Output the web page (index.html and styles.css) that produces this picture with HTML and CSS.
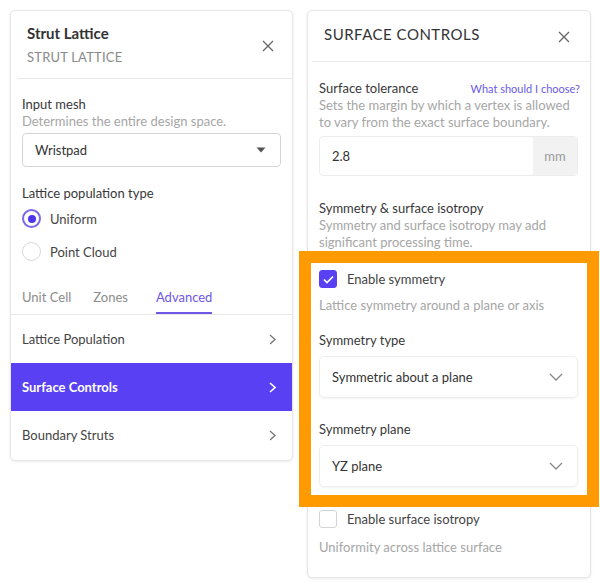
FILE: index.html
```html
<!DOCTYPE html>
<html>
<head>
<meta charset="utf-8">
<link rel="stylesheet" href="styles.css">
</head>
<body>
<div class="page">
  <section class="panel left">
    <header class="phead">
      <div class="ptitles">
        <div class="ptitle">Strut Lattice</div>
        <div class="psub">STRUT LATTICE</div>
      </div>
      <svg class="close" width="12" height="12" viewBox="0 0 12 12"><path d="M1 1L11 11M11 1L1 11" stroke="#666" stroke-width="1.3" fill="none"/></svg>
    </header>
    <div class="lbody">
      <div class="label">Input mesh</div>
      <div class="desc">Determines the entire design space.</div>
      <div class="lselect">
        <span>Wristpad</span>
        <svg width="10" height="6" viewBox="0 0 10 6"><path d="M0.5 0.5H9.5L5 5.5Z" fill="#555"/></svg>
      </div>
      <div class="label gap">Lattice population type</div>
      <div class="radio on"><span class="dot"></span><span>Uniform</span></div>
      <div class="radio"><span class="dot"></span><span>Point Cloud</span></div>
      <nav class="tabs">
        <span class="tab t1">Unit Cell</span>
        <span class="tab t2">Zones</span>
        <span class="tab active">Advanced</span>
      </nav>
    </div>
    <ul class="list">
      <li><span>Lattice Population</span><svg width="7" height="11" viewBox="0 0 7 11"><path d="M1 1L6 5.5L1 10" stroke="#777" stroke-width="1.3" fill="none"/></svg></li>
      <li class="sel"><span>Surface Controls</span><svg width="7" height="11" viewBox="0 0 7 11"><path d="M1 1L6 5.5L1 10" stroke="#fff" stroke-width="1.6" fill="none"/></svg></li>
      <li><span>Boundary Struts</span><svg width="7" height="11" viewBox="0 0 7 11"><path d="M1 1L6 5.5L1 10" stroke="#777" stroke-width="1.3" fill="none"/></svg></li>
    </ul>
  </section>

  <section class="panel right">
    <header class="phead rhead">
      <div class="ptitle caps">SURFACE CONTROLS</div>
      <svg class="close" width="12" height="12" viewBox="0 0 12 12"><path d="M1 1L11 11M11 1L1 11" stroke="#666" stroke-width="1.3" fill="none"/></svg>
    </header>
    <div class="rbody">
      <div class="labelrow"><span class="label">Surface tolerance</span><span class="link">What should I choose?</span></div>
      <div class="desc">Sets the margin by which a vertex is allowed to vary from the exact surface boundary.</div>
      <div class="input"><span class="val">2.8</span><span class="unit">mm</span></div>
      <div class="label gap2">Symmetry &amp; surface isotropy</div>
      <div class="desc">Symmetry and surface isotropy may add significant processing time.</div>
      <div class="check on"><span class="box"><svg width="11" height="9" viewBox="0 0 11 9"><path d="M1 4.5L4 7.5L10 1.5" stroke="#fff" stroke-width="1.7" fill="none"/></svg></span><span>Enable symmetry</span></div>
      <div class="desc cdesc">Lattice symmetry around a plane or axis</div>
      <div class="label st">Symmetry type</div>
      <div class="rselect"><span>Symmetric about a plane</span><svg width="14" height="8" viewBox="0 0 14 8"><path d="M1 1L7 7L13 1" stroke="#888" stroke-width="1.3" fill="none"/></svg></div>
      <div class="label sp">Symmetry plane</div>
      <div class="rselect"><span>YZ plane</span><svg width="14" height="8" viewBox="0 0 14 8"><path d="M1 1L7 7L13 1" stroke="#888" stroke-width="1.3" fill="none"/></svg></div>
      <div class="check iso"><span class="box"></span><span>Enable surface isotropy</span></div>
      <div class="desc cdesc last">Uniformity across lattice surface</div>
    </div>
  </section>

  <div class="highlight"></div>
</div>
</body>
</html>
```

FILE: styles.css
```css
* { box-sizing: border-box; }
html, body { margin: 0; padding: 0; background: #fff; }
body {
  font-family: Lato, "Open Sans", "Liberation Sans", sans-serif;
  font-size: 13px;
  color: #3a3a3a;
  width: 600px;
  height: 588px;
  overflow: hidden;
}
.page {
  position: relative;
  display: flex;
  align-items: flex-start;
  gap: 14px;
  padding: 10px 0 0 10px;
  height: 588px;
}
.panel {
  background: #fff;
  border: 1px solid #e6e6e6;
  border-radius: 5px;
  box-shadow: 0 1px 3px rgba(0,0,0,0.08);
  overflow: hidden;
}
.left { width: 283px; height: 451px; }
.right { width: 284px; height: 568px; }

.phead {
  display: flex;
  justify-content: space-between;
  align-items: center;
  margin-left: 6px;
  border-bottom: 1px solid #e8e8e8;
  height: 68px;
  padding: 0 18px 0 10px;
}
.ptitle { font-size: 15px; font-weight: 700; color: #333; line-height: 20px; }
.psub { font-size: 13px; color: #8a8a8a; margin-top: 6px; letter-spacing: 0.2px; }
.ptitles { margin-top: -1px; }
.close { margin-top: 2px; }
.rhead { height: 51px; margin-left: 4px; padding: 0 20px 0 12px; align-items: flex-start; padding-top: 13px; }
.caps { font-weight: 400; letter-spacing: 0.5px; font-size: 15px; color: #333; }
.rhead .close { margin-top: 7px; }

.lbody { padding: 17px 11px 0 11px; }
.label { line-height: 17px; color: #383838; }
.desc { line-height: 17px; color: #a6a6a6; }
.lselect {
  display: flex;
  justify-content: space-between;
  align-items: center;
  height: 34px;
  margin-top: 3px;
  border: 1px solid #d4d4d4;
  border-radius: 4px;
  padding: 0 14px 0 12px;
  color: #333;
}
.label.gap { margin-top: 18px; }
.radio {
  display: flex;
  align-items: center;
  gap: 9px;
  height: 33px;
  color: #444;
}
.dot {
  width: 19px;
  height: 19px;
  border-radius: 50%;
  border: 1px solid #d8d8d8;
  display: flex;
  align-items: center;
  justify-content: center;
}
.radio.on .dot { border: 2px solid #7a68f0; }
.radio.on .dot::after {
  content: "";
  width: 8px; height: 8px; border-radius: 50%;
  background: #4f35ec;
}
.tabs {
  display: flex;
  align-items: flex-end;
  margin-top: 19px;
  color: #8c8c8c;
}
.tab { line-height: 20px; padding-bottom: 5px; border-bottom: 2px solid transparent; }
.t1 { margin-right: 22px; }
.t2 { margin-right: 28px; }
.tab.active { color: #6e58e8; border-bottom-color: #6e58e8; }

.list { list-style: none; margin: 0; padding: 0; border-top: 1px solid #e8e8e8; }
.list li {
  display: flex;
  justify-content: space-between;
  align-items: center;
  height: 48px;
  padding: 0 16px 0 11px;
  color: #444;
}
.list li.sel { background: #5a40f3; color: #fff; font-weight: 700; }

.rbody { padding: 18px 12px 0 11px; }
.labelrow { display: flex; justify-content: space-between; align-items: center; }
.link { color: #6b5be8; font-size: 11px; margin-right: -2px; }
.input {
  display: flex;
  height: 40px;
  margin-top: 5px;
  border: 1px solid #ececec;
  border-radius: 4px;
  overflow: hidden;
}
.val { flex: 1; display: flex; align-items: center; padding-left: 12px; color: #333; }
.unit { width: 44px; background: #f2f2f2; display: flex; align-items: center; justify-content: center; color: #999; font-size: 13px; }
.label.gap2 { margin-top: 24px; }
.check { display: flex; align-items: center; gap: 10px; color: #444; margin-top: 19px; height: 18px; }
.box {
  width: 18px; height: 18px; border-radius: 3px;
  border: 1px solid #d4d4d4;
  display: flex; align-items: center; justify-content: center;
}
.check.on .box { background: #5a40f3; border-color: #5a40f3; }
.cdesc { margin-top: 9px; }
.cdesc.last { margin-top: 11px; }
.label.st { margin-top: 18px; }
.rselect {
  display: flex;
  justify-content: space-between;
  align-items: center;
  height: 42px;
  margin-top: 7px;
  border: 1px solid #eeeeee;
  border-radius: 5px;
  box-shadow: 0 1px 2px rgba(0,0,0,0.05);
  padding: 0 14px 0 12px;
  color: #333;
}
.label.sp { margin-top: 23px; }
.check.iso { margin-top: 23px; }

.highlight {
  position: absolute;
  left: 299px;
  top: 251px;
  width: 300px;
  height: 256px;
  border: 12px solid #ff9a00;
  pointer-events: none;
}
```
